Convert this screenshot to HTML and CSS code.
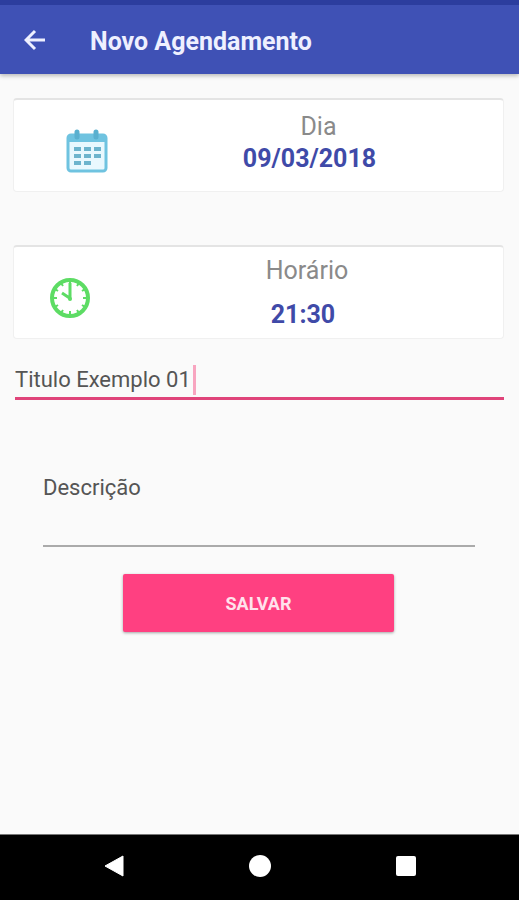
FILE: index.html
```html
<!DOCTYPE html>
<html lang="pt-BR">
<head>
  <meta charset="UTF-8" />
  <meta name="viewport" content="width=device-width, initial-scale=1.0" />
  <title>Novo Agendamento</title>
  <link rel="stylesheet" href="styles.css">
</head>
<body>
  <header class="toolbar">
    <button class="back-btn" type="button" aria-label="Voltar">
      <svg viewBox="0 0 22 22" width="22" height="22">
        <path d="M21 11H3M11 2L2 11l9 9" fill="none" stroke="currentColor" stroke-width="3"/>
      </svg>
    </button>
    <h1>Novo Agendamento</h1>
  </header>

  <main>
    <section class="card card-date">
      <svg class="icon" viewBox="0 0 42 44" width="42" height="44">
        <rect x="2" y="6" width="38" height="36" rx="3" fill="#e9f8fe" stroke="#6fc3e0" stroke-width="3"/>
        <path d="M2 6h38v7H2z" fill="#6fc3e0"/>
        <path d="M11 3v5M30 3v5" stroke="#5ab0cf" stroke-width="5" stroke-linecap="round"/>
        <path d="M8 20h7M18 20h7M28 20h7M8 27h7M18 27h7M28 27h7M8 34h7M18 34h7" stroke="#6db4cd" stroke-width="4"/>
      </svg>
      <div class="info">
        <span class="label">Dia</span>
        <strong>09/03/2018</strong>
      </div>
    </section>

    <section class="card card-time">
      <svg class="icon" viewBox="0 0 42 44" width="42" height="44">
        <circle cx="21" cy="22" r="18" fill="#fff" stroke="#5ddc64" stroke-width="4"/>
        <path d="M21 5v4M21 35v4M4 22h4M34 22h4M12 7l2 3M30 7l-2 3M6 13l3 2M36 13l-3 2M6 31l3-2M36 31l-3-2M12 37l2-3M30 37l-2-3" stroke="#5ddc64" stroke-width="2"/>
        <path d="M21 7v16M22 23l-9-6" fill="none" stroke="#5ddc64" stroke-width="3"/>
        <circle cx="21" cy="23" r="2" fill="#5ddc64"/>
      </svg>
      <div class="info">
        <span class="label">Horário</span>
        <strong>21:30</strong>
      </div>
    </section>

    <form>
      <div class="field field-title">
        <input type="text" id="titulo" value="Titulo Exemplo 01" aria-label="Titulo">
        <span class="caret"></span>
      </div>

      <div class="field field-desc">
        <label for="descricao">Descrição</label>
        <input type="text" id="descricao">
      </div>

      <button class="save-btn" type="submit">SALVAR</button>
    </form>
  </main>

  <nav class="navbar">
    <button type="button" aria-label="Voltar">
      <svg viewBox="0 0 22 22" width="22" height="22"><path d="M2 11L20 1v20z" fill="currentColor" stroke="currentColor" stroke-linejoin="round"/></svg>
    </button>
    <button type="button" aria-label="Início">
      <svg viewBox="0 0 22 22" width="22" height="22"><circle cx="11" cy="11" r="11" fill="currentColor"/></svg>
    </button>
    <button type="button" aria-label="Recentes">
      <svg viewBox="0 0 22 22" width="22" height="22"><rect x="1" y="1" width="20" height="20" rx="2" fill="currentColor"/></svg>
    </button>
  </nav>
</body>
</html>
```
FILE: styles.css
```css
:root {
  --primary: #3f51b5;
  --primary-dark: #2c3d9e;
  --accent: #ff4081;
  --bg: #fafafa;
  --text: #555;
}

* {
  box-sizing: border-box;
}

body {
  font-family: Roboto, sans-serif;
  background: var(--bg);
  color: var(--text);
  margin: 0;
  min-height: 100vh;
  display: flex;
  flex-direction: column;
}

button {
  font-family: inherit;
  border: none;
  padding: 0;
  cursor: pointer;
}

svg {
  display: block;
}

.toolbar {
  height: 74px;
  background: var(--primary);
  border-top: 5px solid var(--primary-dark);
  color: #eef0ff;
  display: flex;
  align-items: center;
  gap: 44px;
  padding: 0 24px;
  box-shadow: 0 2px 4px rgba(0,0,0,0.25);
}

.toolbar h1 {
  font-size: 25px;
  line-height: 32px;
  font-weight: 700;
  margin: 4px 0 0;
}

.back-btn {
  background: none;
  color: inherit;
}

main {
  flex: 1;
  padding: 24px 15px 24px 13px;
}

.card {
  display: flex;
  align-items: center;
  height: 94px;
  background: #fff;
  border: 1px solid #f0f0f0;
  border-top: 2px solid #e4e4e4;
  border-radius: 4px;
  margin-bottom: 53px;
}

.card-date {
  gap: 8px;
  padding-left: 52px;
}

.card-time {
  gap: 12px;
  padding-left: 35px;
  margin-bottom: 16px;
}

.card .icon {
  flex: none;
  margin-top: 10px;
}

.info {
  flex: 1;
  display: flex;
  flex-direction: column;
  text-align: center;
  font-size: 25px;
  line-height: 32px;
}

.info .label {
  color: #8a8a8a;
}

.info strong {
  color: #3f4aa8;
  font-weight: 700;
}

.card-date .info {
  padding-bottom: 6px;
}

.card-date .label {
  padding-left: 18px;
}

.card-time .info {
  gap: 12px;
}

.card-time .label {
  padding-left: 8px;
}

.field input {
  font-family: inherit;
  font-size: 22px;
  line-height: 32px;
  color: inherit;
  background: none;
  border: none;
  outline: none;
  padding: 0;
}

.field-title {
  display: flex;
  align-items: center;
  height: 45px;
  margin-left: 2px;
  padding-top: 8px;
  border-bottom: 3px solid #e0447a;
}

.field-title input {
  field-sizing: content;
}

.caret {
  width: 3px;
  height: 30px;
  margin-left: 2px;
  background: #f8a5c0;
}

.field-desc {
  margin: 72px 29px 0 30px;
}

.field-desc label {
  display: block;
  font-size: 22px;
  line-height: 32px;
}

.field-desc input {
  display: block;
  width: 100%;
  height: 43px;
  border-bottom: 2px solid #aaa;
}

.save-btn {
  display: block;
  width: 55%;
  height: 58px;
  margin: 27px auto 0;
  background: var(--accent);
  color: #ffe3ec;
  font-size: 18px;
  font-weight: 700;
  border-radius: 2px;
  box-shadow: 0 1px 3px rgba(0,0,0,0.35);
}

.navbar {
  height: 66px;
  background: #000;
  border-top: 1px solid #777;
  display: flex;
  align-items: center;
  justify-content: center;
  gap: 124px;
  padding-bottom: 4px;
}

.navbar button {
  background: none;
  color: #fff;
}
```
